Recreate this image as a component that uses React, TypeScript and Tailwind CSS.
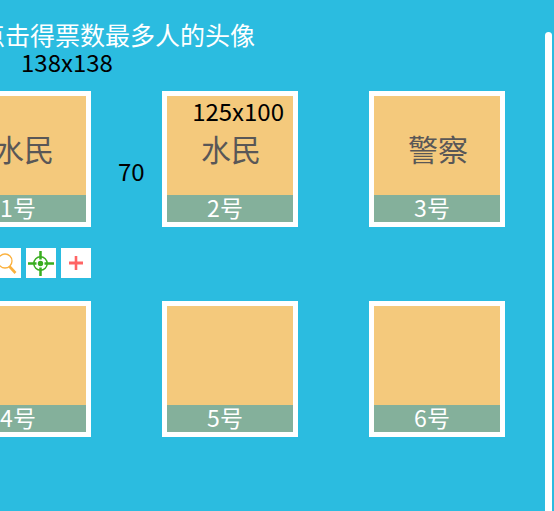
import type { ReactNode } from "react";

type Player = { seat: number; role?: string; size?: string; gap?: string; tools?: boolean };

const players: Player[] = [
  { seat: 1, role: "水民", gap: "70", tools: true },
  { seat: 2, role: "水民", size: "125x100" },
  { seat: 3, role: "警察" },
  { seat: 4 },
  { seat: 5 },
  { seat: 6 },
];

function ToolButton({ label, children }: { label: string; children: ReactNode }) {
  return (
    <button type="button" aria-label={label} className="size-[30px] shrink-0 bg-white">
      {children}
    </button>
  );
}

function Tools() {
  return (
    <div className="mt-[21px] flex justify-end gap-[5px]">
      <ToolButton label="查验">
        <svg viewBox="0 0 30 30" className="size-[30px]" fill="none" stroke="#fbb03b">
          <circle cx="14" cy="13" r="7" strokeWidth="1.3" />
          <path d="M18.5 18.5 24.5 25" strokeWidth="2.6" />
        </svg>
      </ToolButton>
      <ToolButton label="瞄准">
        <svg viewBox="0 0 30 30" className="size-[30px]" fill="none" stroke="#39ad1f">
          <circle cx="14.5" cy="15.5" r="6.7" strokeWidth="1.5" />
          <circle cx="14.5" cy="15.5" r="2.7" fill="#39ad1f" stroke="none" />
          <path d="M14.5 3v8.5M14.5 19.5V28M2 15.5h8.5M18.5 15.5H28" strokeWidth="2.5" />
        </svg>
      </ToolButton>
      <ToolButton label="治疗">
        <svg viewBox="0 0 30 30" className="size-[30px]" fill="none">
          <path d="M15 8v14" stroke="#ff6464" strokeWidth="2.6" />
          <path d="M8 15h14" stroke="#ff6464" strokeWidth="3" />
        </svg>
      </ToolButton>
    </div>
  );
}

function PlayerCard({ seat, role, size, gap, tools }: Player) {
  return (
    <li className="w-[136px]">
      <div className="relative">
        <button type="button" className="flex h-[136px] w-full flex-col border-[5px] border-white bg-[#f4c97c]">
          <span className="flex w-full flex-1 items-center justify-center pt-1 pl-0.5 text-[30px] leading-8 text-[#595757]">
            {role}
          </span>
          <span className="h-[27px] w-full bg-[#84b09b] pr-[10px] text-center text-[23px] leading-6 text-white">
            {seat}号
          </span>
        </button>
        {size && (
          <span className="pointer-events-none absolute top-2 right-[14px] text-2xl leading-6 text-black">{size}</span>
        )}
        {gap && (
          <span className="pointer-events-none absolute top-[68px] left-full ml-[27px] text-2xl leading-6 text-black">
            {gap}
          </span>
        )}
      </div>
      {tools && <Tools />}
    </li>
  );
}

export default function App() {
  return (
    <div className="flex h-screen overflow-hidden bg-[#2bbce0] font-['Noto_Sans_CJK_SC',sans-serif]">
      <main className="min-w-0 flex-1 pr-10">
        <h1 className="-ml-[45px] pt-5 text-[25px] leading-7 whitespace-nowrap text-white">
          请点击得票数最多人的头像
        </h1>
        <p className="mt-0.5 pl-[21px] text-2xl leading-6 text-black">138x138</p>
        <ul className="mt-[17px] -ml-[45px] grid grid-cols-[repeat(3,136px)] justify-between gap-y-[23px]">
          {players.map((player) => (
            <PlayerCard key={player.seat} {...player} />
          ))}
        </ul>
      </main>
      <div className="mt-8 mr-0.5 w-[7px] shrink-0 rounded-t-full bg-white" />
    </div>
  );
}
